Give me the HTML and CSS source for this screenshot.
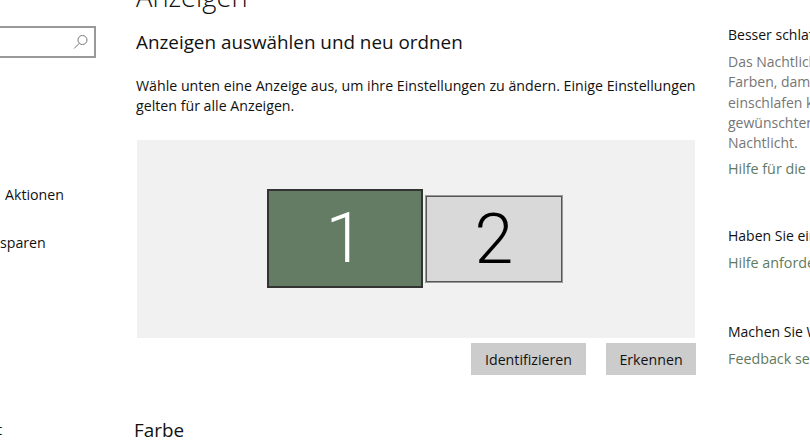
FILE: index.html
```html
<!DOCTYPE html>
<html lang="de">
<head>
  <meta charset="UTF-8" />
  <title>Anzeige</title>
  <link rel="stylesheet" href="styles.css">
</head>
<body>
  <div class="page">
    <div class="sidebar">
      <div class="search">
        <svg class="search-icon" width="16" height="16" viewBox="0 0 16 16">
          <circle cx="9.5" cy="6" r="4.5" fill="none" stroke="#777" stroke-width="1" />
          <path d="M6.3 9.3 L1.2 14.5" fill="none" stroke="#777" stroke-width="1" />
        </svg>
      </div>
      <div class="nav-item nav-actions">Aktionen</div>
      <div class="nav-item nav-save">sparen</div>
      <div class="nav-item nav-last">t</div>
    </div>

    <div class="main">
      <h1>Anzeigen</h1>
      <h2>Anzeigen auswählen und neu ordnen</h2>
      <p class="intro">Wähle unten eine Anzeige aus, um ihre Einstellungen zu ändern. Einige Einstellungen gelten für alle Anzeigen.</p>
      <div class="stage">
        <div class="monitor monitor-active">1</div>
        <div class="monitor monitor-second">2</div>
      </div>
      <div class="buttons">
        <button class="btn-identify">Identifizieren</button>
        <button class="btn-detect">Erkennen</button>
      </div>
      <h2 class="color-title">Farbe</h2>
    </div>

    <div class="aside">
      <div class="aside-block block-sleep">
        <div class="aside-title">Besser schlafen</div>
        <div class="aside-text">Das Nachtlicht kann<br>Farben, damit Sie<br>einschlafen können<br>gewünschten Zeit<br>Nachtlicht.</div>
        <a class="aside-link">Hilfe für die Einrichtung</a>
      </div>
      <div class="aside-block">
        <div class="aside-title">Haben Sie eine Frage?</div>
        <a class="aside-link">Hilfe anfordern</a>
      </div>
      <div class="aside-block">
        <div class="aside-title">Machen Sie Windows besser</div>
        <a class="aside-link">Feedback senden</a>
      </div>
    </div>
  </div>
</body>
</html>
```

FILE: styles.css
```css
html, body {
  margin: 0;
  padding: 0;
  height: 100%;
  overflow: hidden;
  background: #fff;
}
body {
  font-family: "Open Sans", "Noto Sans", sans-serif;
  font-size: 14.2px;
  color: #111;
}
.page {
  display: flex;
  height: 441px;
  overflow: hidden;
}

/* left nav, cut off by the window */
.sidebar {
  width: 96px;
  flex: none;
  padding-top: 26px;
}
.search {
  box-sizing: border-box;
  height: 32px;
  border: 2px solid #999;
  border-left: none;
  display: flex;
  align-items: center;
  justify-content: flex-end;
  padding-right: 5px;
}
.nav-item {
  line-height: 20px;
}
.nav-actions {
  margin-top: 127px;
  padding-left: 5px;
}
.nav-save {
  margin-top: 28px;
}
.nav-last {
  margin-top: 167px;
  margin-left: -3px;
}

.main {
  width: 560px;
  flex: none;
  margin-left: 40px;
}
h1 {
  font-size: 27.3px;
  font-weight: 300;
  line-height: 36px;
  margin: -21px 0 0 0;
}
h2 {
  font-size: 18.85px;
  font-weight: 400;
  line-height: 26px;
  margin: 14px 0 0 0;
}
.intro {
  margin: 21px 0 0 0;
  line-height: 20px;
}
.stage {
  box-sizing: border-box;
  height: 198px;
  margin: 24px 0 0 1px;
  width: 558px;
  padding: 0 2px 2px 0;
  background: #f1f1f1;
  display: flex;
  justify-content: center;
  align-items: center;
  gap: 2px;
}
.monitor {
  box-sizing: border-box;
  display: flex;
  align-items: center;
  justify-content: center;
  font-family: "Roboto", sans-serif;
  font-weight: 300;
  font-size: 70px;
}
.monitor-active {
  width: 156px;
  height: 99px;
  background: #647c64;
  border: 2px solid #333;
  color: #fff;
}
.monitor-second {
  width: 138px;
  height: 88px;
  margin-top: 2px;
  background: #d9d9d9;
  border: 2px solid #555;
  outline: 1px solid #999;
  outline-offset: -1px;
  color: #000;
}
.buttons {
  display: flex;
  justify-content: flex-end;
  gap: 20px;
  margin-top: 5px;
}
.buttons button {
  height: 32px;
  border: none;
  background: #ccc;
  color: #111;
  font-family: inherit;
  font-size: 14.2px;
  padding: 0;
}
.btn-identify {
  width: 115px;
}
.btn-detect {
  width: 90px;
}
.color-title {
  margin: 42px 0 0 -2px;
}

/* right column */
.aside {
  flex: none;
  width: 82px;
  margin-left: 32px;
  padding-top: 25px;
  overflow: hidden;
  white-space: nowrap;
  font-size: 14px;
}
.aside-block {
  margin-bottom: 49px;
}
.block-sleep {
  margin-bottom: 47px;
}
.aside-title {
  line-height: 20px;
}
.aside-text {
  color: #767676;
  line-height: 20.3px;
  margin-top: 7px;
}
.aside-text + .aside-link {
  margin-top: 6px;
}
.aside-link {
  display: block;
  color: #5f7a5f;
  font-size: 14.3px;
  line-height: 20px;
  margin-top: 7px;
}
```
